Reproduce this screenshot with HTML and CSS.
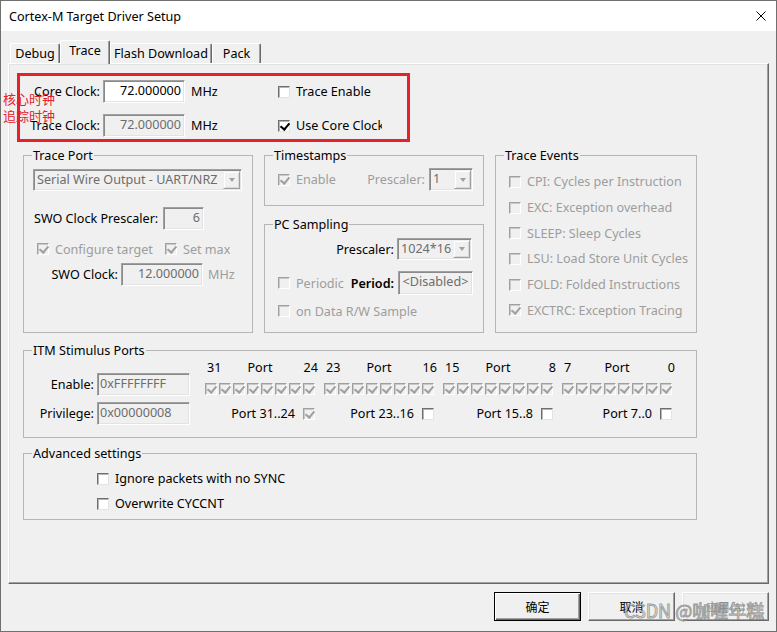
FILE: index.html
```html
<!DOCTYPE html>
<html>
<head>
  <meta charset="utf-8">
  <link rel="stylesheet" href="styles.css">
</head>
<body>
  <div class="window">
    <div class="titlebar">
      <span class="title">Cortex-M Target Driver Setup</span>
      <svg class="close" width="10" height="10" viewBox="0 0 10 10"><path d="M0.5 0.5l9 9M9.5 0.5l-9 9" stroke="#000" stroke-width="1"/></svg>
    </div>

    <div class="client">
      <div class="tabs">
        <div class="tab tab-debug">Debug</div>
        <div class="tab tab-trace active">Trace</div>
        <div class="tab tab-flash">Flash Download</div>
        <div class="tab tab-pack">Pack</div>
      </div>

      <div class="panel">
        <!-- clock settings, boxed in red by the annotation -->
        <div class="clock-box">
          <span class="lbl">Core Clock:</span>
          <div class="field">72.000000</div>
          <span class="unit">MHz</span>
          <div class="check"><span class="cb"></span>Trace Enable</div>
          <span class="lbl">Trace Clock:</span>
          <div class="field dis">72.000000</div>
          <span class="unit">MHz</span>
          <div class="check"><span class="cb on"></span>Use Core Clock</div>
        </div>

        <div class="groups">
          <fieldset class="group trace-port">
            <legend>Trace Port</legend>
            <div class="combo port-select"><span class="combo-text">Serial Wire Output - UART/NRZ</span><span class="drop"></span></div>
            <div class="row presc-row">
              <span class="presc-lbl">SWO Clock Prescaler:</span>
              <div class="field dis presc">6</div>
            </div>
            <div class="row cfg-row">
              <div class="check dim cfg"><span class="cb dis on"></span>Configure target</div>
              <div class="check dim"><span class="cb dis on"></span>Set max</div>
            </div>
            <div class="row swo-row">
              <span class="lbl swo-lbl">SWO Clock:</span>
              <div class="field dis swo">12.000000</div>
              <span class="unit dim">MHz</span>
            </div>
          </fieldset>

          <div class="mid">
            <fieldset class="group timestamps">
              <legend>Timestamps</legend>
              <div class="row ts-row">
                <div class="check dim"><span class="cb dis on"></span>Enable</div>
                <span class="dim ts-lbl">Prescaler:</span>
                <div class="combo ts-combo"><span class="combo-text">1</span><span class="drop"></span></div>
              </div>
            </fieldset>

            <fieldset class="group pc-sampling">
              <legend>PC Sampling</legend>
              <div class="row pc-presc">
                <span>Prescaler:</span>
                <div class="combo pc-combo"><span class="combo-text">1024*16</span><span class="drop"></span></div>
              </div>
              <div class="row pc-period">
                <div class="check dim"><span class="cb dis"></span>Periodic</div>
                <span class="period-lbl">Period:</span>
                <div class="field dis period">&lt;Disabled&gt;</div>
              </div>
              <div class="row pc-data">
                <div class="check dim"><span class="cb dis"></span>on Data R/W Sample</div>
              </div>
            </fieldset>
          </div>

          <fieldset class="group trace-events">
            <legend>Trace Events</legend>
            <div class="events">
              <div class="check dim"><span class="cb dis"></span>CPI: Cycles per Instruction</div>
              <div class="check dim"><span class="cb dis"></span>EXC: Exception overhead</div>
              <div class="check dim"><span class="cb dis"></span>SLEEP: Sleep Cycles</div>
              <div class="check dim"><span class="cb dis"></span>LSU: Load Store Unit Cycles</div>
              <div class="check dim"><span class="cb dis"></span>FOLD: Folded Instructions</div>
              <div class="check dim"><span class="cb dis on"></span>EXCTRC: Exception Tracing</div>
            </div>
          </fieldset>
        </div>

        <fieldset class="group itm">
          <legend>ITM Stimulus Ports</legend>
          <div class="itm-body">
            <div class="itm-fields">
              <span class="lbl">Enable:</span>
              <div class="field dis left">0xFFFFFFFF</div>
              <span class="lbl">Privilege:</span>
              <div class="field dis left">0x00000008</div>
            </div>
            <div class="ports">
              <div class="port-group">
                <div class="port-head"><span>31</span><span>Port</span><span>24</span></div>
                <div class="port-cbs">
                  <span class="cb dis on"></span><span class="cb dis on"></span><span class="cb dis on"></span><span class="cb dis on"></span>
                  <span class="cb dis on"></span><span class="cb dis on"></span><span class="cb dis on"></span><span class="cb dis on"></span>
                </div>
                <div class="port-foot">Port 31..24<span class="cb dis on"></span></div>
              </div>
              <div class="port-group">
                <div class="port-head"><span>23</span><span>Port</span><span>16</span></div>
                <div class="port-cbs">
                  <span class="cb dis on"></span><span class="cb dis on"></span><span class="cb dis on"></span><span class="cb dis on"></span>
                  <span class="cb dis on"></span><span class="cb dis on"></span><span class="cb dis on"></span><span class="cb dis on"></span>
                </div>
                <div class="port-foot">Port 23..16<span class="cb"></span></div>
              </div>
              <div class="port-group">
                <div class="port-head"><span>15</span><span>Port</span><span>8</span></div>
                <div class="port-cbs">
                  <span class="cb dis on"></span><span class="cb dis on"></span><span class="cb dis on"></span><span class="cb dis on"></span>
                  <span class="cb dis on"></span><span class="cb dis on"></span><span class="cb dis on"></span><span class="cb dis on"></span>
                </div>
                <div class="port-foot">Port 15..8<span class="cb"></span></div>
              </div>
              <div class="port-group">
                <div class="port-head"><span>7</span><span>Port</span><span>0</span></div>
                <div class="port-cbs">
                  <span class="cb dis on"></span><span class="cb dis on"></span><span class="cb dis on"></span><span class="cb dis on"></span>
                  <span class="cb dis on"></span><span class="cb dis on"></span><span class="cb dis on"></span><span class="cb dis on"></span>
                </div>
                <div class="port-foot">Port 7..0<span class="cb"></span></div>
              </div>
            </div>
          </div>
        </fieldset>

        <fieldset class="group advanced">
          <legend>Advanced settings</legend>
          <div class="adv-list">
            <div class="check"><span class="cb"></span>Ignore packets with no SYNC</div>
            <div class="check"><span class="cb"></span>Overwrite CYCCNT</div>
          </div>
        </fieldset>
      </div>

      <div class="buttons">
        <div class="btn default">确定</div>
        <div class="btn">取消</div>
        <div class="btn off">应用(A)</div>
      </div>
    </div>

    <div class="note">核心时钟<br>追踪时钟</div>
    <div class="watermark">CSDN @咖喱年糕</div>
  </div>
</body>
</html>
```

FILE: styles.css
```css
* {
  box-sizing: border-box;
}

body {
  margin: 0;
  font-family: "Noto Sans", "Noto Sans CJK SC", sans-serif;
  font-size: 12.6px;
  color: #000;
  background: #fff;
}

.window {
  position: relative;
  width: 777px;
  height: 632px;
  border: 1px solid #707070;
  background: #f0f0f0;
}

.titlebar {
  height: 30px;
  display: flex;
  align-items: center;
  justify-content: space-between;
  padding: 0 10px 0 8px;
  background: #fff;
}

.client {
  padding: 9px 7px 0;
}

/* tabs */
.tabs {
  display: flex;
  height: 23px;
  padding-left: 2px;
}

.tab {
  height: 20px;
  margin-top: 3px;
  line-height: 19px;
  text-align: center;
  border: 1px solid;
  border-bottom: none;
  border-color: #fff #696969 #fff #fff;
  border-radius: 2px 2px 0 0;
  box-shadow: inset -1px 0 #a0a0a0;
}

.tab.active {
  position: relative;
  z-index: 1;
  height: 24px;
  margin-top: 0;
  background: #f0f0f0;
}

.tab-debug { width: 50px; }
.tab-trace { width: 50px; }
.tab-flash { width: 102px; }
.tab-pack { width: 49px; }

.panel {
  width: 761px;
  height: 521px;
  border: 1px solid;
  border-color: #fff #696969 #696969 #fff;
  box-shadow: inset -1px -1px #a0a0a0, inset 1px 1px #e3e3e3;
}

/* common controls */
.row {
  display: flex;
  align-items: center;
}

.lbl {
  text-align: right;
  padding-right: 3px;
  white-space: nowrap;
}

.dim {
  color: #9d9d9d;
}

.field {
  height: 23px;
  line-height: 20px;
  padding: 0 3px;
  text-align: right;
  white-space: nowrap;
  overflow: hidden;
  background: #fff;
  border: 1px solid;
  border-color: #a0a0a0 #fff #fff #a0a0a0;
  box-shadow: inset 1px 1px #8a8a8a, inset -1px -1px #e3e3e3;
}

.field.dis {
  background: #f0f0f0;
  color: #6d6d6d;
}

.field.left {
  text-align: left;
}

.unit {
  padding-left: 6px;
}

.check {
  display: flex;
  align-items: center;
  gap: 6px;
  white-space: nowrap;
  overflow: hidden;
}

.cb {
  position: relative;
  flex: none;
  width: 12px;
  height: 12px;
  background: #fff;
  border: 1px solid;
  border-color: #6d6d6d #e3e3e3 #e3e3e3 #6d6d6d;
  box-shadow: inset 1px 1px #b5b5b5;
}

.cb.dis {
  background: #f0f0f0;
  border-color: #a0a0a0 #fff #fff #a0a0a0;
  box-shadow: inset 1px 1px #c9c9c9;
}

.cb.on::after {
  content: "";
  position: absolute;
  left: 3px;
  top: 0;
  width: 4px;
  height: 7px;
  border: solid #000;
  border-width: 0 2px 2px 0;
  transform: rotate(40deg);
}

.cb.dis.on::after {
  border-color: #a0a0a0;
}

.combo {
  display: flex;
  height: 22px;
  background: #f0f0f0;
  color: #6d6d6d;
  border: 1px solid;
  border-color: #a0a0a0 #fff #fff #a0a0a0;
  box-shadow: inset 1px 1px #8a8a8a, inset -1px -1px #e3e3e3;
}

.combo-text {
  flex: 1;
  padding-left: 3px;
  line-height: 20px;
  white-space: nowrap;
  overflow: hidden;
}

.drop {
  display: flex;
  align-items: center;
  justify-content: center;
  width: 17px;
  margin: 1px;
  border: 1px solid;
  border-color: #f0f0f0 #a0a0a0 #a0a0a0 #f0f0f0;
  box-shadow: inset 1px 1px #fff, inset -1px -1px #d8d8d8;
}

.drop::before {
  content: "";
  border-style: solid;
  border-width: 4px 3.5px 0;
  border-color: #a0a0a0 transparent transparent;
}

/* red annotation */
.clock-box {
  display: grid;
  grid-template-columns: 83px 82px 93px 104px;
  grid-template-rows: 23px 23px;
  row-gap: 11px;
  align-items: center;
  width: 393px;
  height: 69px;
  margin: 9px 0 0 8px;
  padding-top: 4px;
  border: 3px solid #e5212b;
}

.note {
  position: absolute;
  left: 2px;
  top: 89px;
  font-family: "Noto Sans CJK SC", sans-serif;
  font-size: 13px;
  line-height: 17px;
  color: #e5212b;
}

/* group boxes */
.group {
  margin: 0;
  padding: 0;
  min-width: 0;
  border: 1px solid #b5b5b5;
}

.group legend {
  margin-left: 8px;
  padding: 0 1px;
  line-height: 17px;
}

.groups {
  display: flex;
  gap: 11px;
  height: 186px;
  margin: 5px 0 0 14px;
}

.trace-port { width: 230px; }
.trace-events { width: 202px; }

.mid {
  display: flex;
  flex-direction: column;
  gap: 10px;
  width: 220px;
}

.timestamps { height: 59px; }
.pc-sampling { height: 117px; }

.port-select {
  width: 209px;
  margin: 5px 0 0 9px;
}

.presc-row {
  height: 23px;
  margin-top: 16px;
  padding-left: 10px;
}

.presc-lbl { width: 129px; }
.presc { width: 41px; }

.cfg-row {
  height: 12px;
  margin-top: 13px;
  padding-left: 13px;
}

.cfg { width: 128px; }

.swo-row {
  height: 23px;
  margin-top: 8px;
}

.swo-lbl { width: 97px; }
.swo { width: 82px; }
.swo-row .unit { padding-left: 5px; }

.ts-row {
  height: 23px;
  margin-top: 4px;
  padding: 0 10px 0 13px;
}

.ts-lbl {
  margin-left: auto;
  margin-right: 4px;
}

.ts-combo {
  width: 44px;
  height: 23px;
}

.pc-presc {
  justify-content: flex-end;
  gap: 3px;
  height: 22px;
  margin-top: 5px;
  padding-right: 11px;
}

.pc-combo { width: 75px; }

.pc-period {
  height: 24px;
  margin-top: 11px;
  padding: 0 10px 0 13px;
}

.period-lbl {
  margin-left: auto;
  margin-right: 4px;
  font-weight: 600;
}

.period {
  width: 75px;
  height: 24px;
  text-align: center;
}

.pc-data {
  height: 12px;
  margin-top: 10px;
  padding-left: 13px;
}

.events {
  display: grid;
  grid-auto-rows: 25.7px;
  align-items: center;
  padding: 5px 0 0 13px;
}

/* ITM */
.itm {
  width: 674px;
  height: 96px;
  margin: 9px 0 0 14px;
}

.itm-body {
  display: flex;
}

.itm-fields {
  display: grid;
  grid-template-columns: 73px 93px;
  grid-template-rows: 23px 23px;
  row-gap: 6px;
  align-items: center;
  padding-top: 14px;
}

.itm-fields .field {
  padding-left: 2px;
}

.ports {
  display: flex;
  gap: 9px;
  margin-left: 15px;
}

.port-group {
  width: 110px;
}

.port-head {
  display: grid;
  grid-template-columns: 1fr auto 1fr;
  height: 17px;
  line-height: 17px;
}

.port-head span:first-child { padding-left: 2px; }

.port-head span:last-child {
  justify-self: end;
  margin-right: -3px;
}

.port-cbs {
  display: flex;
  gap: 2px;
  margin-top: 7px;
}

.port-foot {
  display: flex;
  justify-content: flex-end;
  align-items: center;
  gap: 8px;
  height: 17px;
  margin-top: 10px;
}

.advanced {
  width: 674px;
  height: 75px;
  margin: 7px 0 0 14px;
}

.adv-list {
  display: grid;
  grid-auto-rows: 25px;
  align-items: center;
  padding: 4px 0 0 73px;
}

/* dialog buttons */
.buttons {
  display: flex;
  justify-content: flex-end;
  gap: 7px;
  margin-top: 8px;
}

.btn {
  display: flex;
  align-items: center;
  justify-content: center;
  width: 87px;
  height: 29px;
  font-family: "Noto Sans CJK SC", sans-serif;
  font-size: 12px;
  border: 1px solid;
  border-color: #fff #696969 #696969 #fff;
  box-shadow: inset -1px -1px #a0a0a0, inset 1px 1px #e3e3e3;
}

.btn.default {
  border-color: #000;
  box-shadow: inset 1px 1px #fff, inset -1px -1px #696969, inset -2px -2px #a0a0a0;
}

.btn.off {
  color: #a0a0a0;
  text-shadow: 1px 1px #fff;
}

.watermark {
  position: absolute;
  left: 623px;
  top: 596px;
  font-family: "Noto Sans CJK SC", sans-serif;
  font-size: 18px;
  white-space: nowrap;
  color: rgba(255, 255, 255, 0.5);
  -webkit-text-stroke: 1px rgba(110, 110, 110, 0.65);
}
```
